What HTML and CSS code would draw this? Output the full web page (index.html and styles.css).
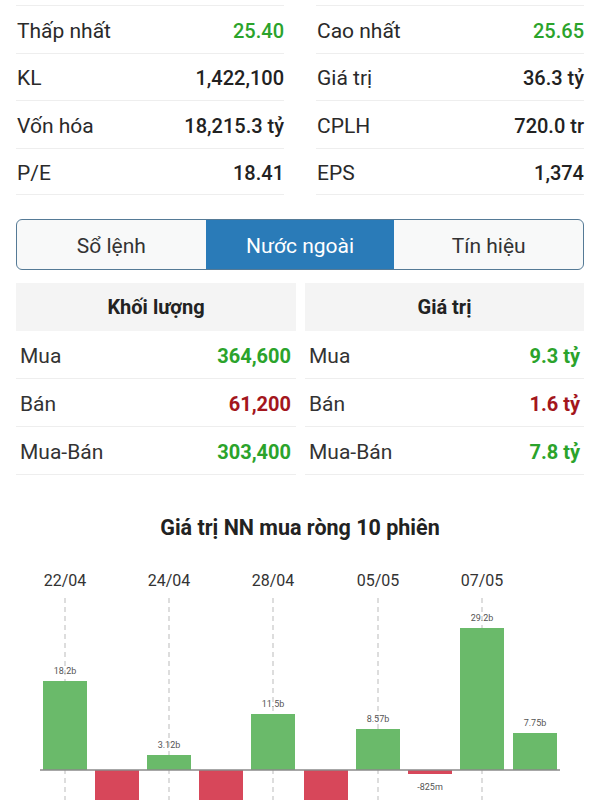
FILE: index.html
```html
<!DOCTYPE html>
<html lang="vi">
<head>
    <meta charset="UTF-8">
    <meta name="viewport" content="width=device-width, initial-scale=1.0">
    <title>Nước ngoài</title>
    <link rel="stylesheet" href="styles.css">
</head>
<body>
    <div class="page">
        <div class="stats">
            <div class="stats-col">
                <div class="stat-row"><span class="stat-label">Thấp nhất</span><span class="stat-value up">25.40</span></div>
                <div class="stat-row"><span class="stat-label">KL</span><span class="stat-value">1,422,100</span></div>
                <div class="stat-row"><span class="stat-label">Vốn hóa</span><span class="stat-value">18,215.3 tỷ</span></div>
                <div class="stat-row"><span class="stat-label">P/E</span><span class="stat-value">18.41</span></div>
            </div>
            <div class="stats-col">
                <div class="stat-row"><span class="stat-label">Cao nhất</span><span class="stat-value up">25.65</span></div>
                <div class="stat-row"><span class="stat-label">Giá trị</span><span class="stat-value">36.3 tỷ</span></div>
                <div class="stat-row"><span class="stat-label">CPLH</span><span class="stat-value">720.0 tr</span></div>
                <div class="stat-row"><span class="stat-label">EPS</span><span class="stat-value">1,374</span></div>
            </div>
        </div>

        <div class="tabs">
            <div class="tab">Sổ lệnh</div>
            <div class="tab active">Nước ngoài</div>
            <div class="tab">Tín hiệu</div>
        </div>

        <div class="foreign">
            <div class="foreign-col">
                <div class="foreign-header">Khối lượng</div>
                <div class="foreign-row"><span>Mua</span><span class="foreign-value up">364,600</span></div>
                <div class="foreign-row"><span>Bán</span><span class="foreign-value down">61,200</span></div>
                <div class="foreign-row"><span>Mua-Bán</span><span class="foreign-value up">303,400</span></div>
            </div>
            <div class="foreign-col">
                <div class="foreign-header">Giá trị</div>
                <div class="foreign-row"><span>Mua</span><span class="foreign-value up">9.3 tỷ</span></div>
                <div class="foreign-row"><span>Bán</span><span class="foreign-value down">1.6 tỷ</span></div>
                <div class="foreign-row"><span>Mua-Bán</span><span class="foreign-value up">7.8 tỷ</span></div>
            </div>
        </div>
    </div>

    <div class="chart">
        <h3 class="chart-title">Giá trị NN mua ròng 10 phiên</h3>
        <svg class="chart-svg" width="600" height="260" viewBox="0 0 600 260">
            <g class="grid">
                <line x1="65" y1="47" x2="65" y2="260"/>
                <line x1="169" y1="47" x2="169" y2="260"/>
                <line x1="273" y1="47" x2="273" y2="260"/>
                <line x1="378" y1="47" x2="378" y2="260"/>
                <line x1="482" y1="47" x2="482" y2="260"/>
            </g>
            <g class="dates">
                <text x="65" y="35">22/04</text>
                <text x="169" y="35">24/04</text>
                <text x="273" y="35">28/04</text>
                <text x="378" y="35">05/05</text>
                <text x="482" y="35">07/05</text>
            </g>
            <g class="bar-pos">
                <rect x="43" y="130" width="44" height="89"/>
                <rect x="147" y="204" width="44" height="15"/>
                <rect x="251" y="163" width="44" height="56"/>
                <rect x="356" y="178" width="44" height="41"/>
                <rect x="460" y="77" width="44" height="142"/>
                <rect x="513" y="182" width="44" height="37"/>
            </g>
            <g class="bar-neg">
                <rect x="95" y="219" width="44" height="50"/>
                <rect x="199" y="219" width="44" height="50"/>
                <rect x="304" y="219" width="44" height="50"/>
                <rect x="408" y="219" width="44" height="4"/>
            </g>
            <line class="axis" x1="40" y1="219" x2="560" y2="219"/>
            <g class="bar-labels">
                <text x="65" y="123">18.2b</text>
                <text x="169" y="197">3.12b</text>
                <text x="273" y="156">11.5b</text>
                <text x="378" y="171">8.57b</text>
                <text x="430" y="239">-825m</text>
                <text x="482" y="70">29.2b</text>
                <text x="535" y="175">7.75b</text>
            </g>
        </svg>
    </div>
</body>
</html>
```

FILE: styles.css
```css
body {
    font-family: Roboto, "Noto Sans", "Liberation Sans", sans-serif;
    color: #333;
    margin: 0;
    background-color: white;
    overflow: hidden;
}
.page {
    padding: 5px 16px 0;
}
.up { color: #2ba32b; }
.down { color: #a3161c; }

/* top stats */
.stats {
    display: grid;
    grid-template-columns: 1fr 1fr;
    gap: 32px;
}
.stat-row {
    display: flex;
    justify-content: space-between;
    align-items: center;
    box-sizing: border-box;
    height: 47.5px;
    padding-top: 3px;
    border-top: 1px solid #eeeeee;
    font-size: 21px;
}
.stat-row:last-child {
    border-bottom: 1px solid #eeeeee;
}
.stat-label {
    padding-left: 1px;
    color: #2a2a2a;
}
.stat-value {
    font-size: 20px;
    font-weight: 500;
    color: #222;
}
.stat-value.up { color: #2ba32b; }

/* tabs */
.tabs {
    display: grid;
    grid-template-columns: repeat(3, 1fr);
    margin-top: 24px;
    height: 49px;
    border: 1.5px solid #557a96;
    border-radius: 6px;
    overflow: hidden;
    background-color: #f8f9f9;
}
.tab {
    display: flex;
    align-items: center;
    justify-content: center;
    padding-top: 3px;
    font-size: 21px;
    color: #333;
}
.tab.active {
    background-color: #2a7bb8;
    color: white;
}

/* foreign trade */
.foreign {
    display: grid;
    grid-template-columns: 280px 1fr;
    gap: 9px;
    margin-top: 13px;
}
.foreign-header {
    height: 48px;
    display: flex;
    align-items: center;
    justify-content: center;
    background-color: #f4f4f4;
    font-size: 20px;
    font-weight: bold;
    color: #222;
}
.foreign-row {
    display: flex;
    justify-content: space-between;
    align-items: center;
    box-sizing: border-box;
    height: 48px;
    padding: 3px 5px 0 4px;
    border-bottom: 1px solid #eeeeee;
    font-size: 21px;
}
.foreign-col:last-child .foreign-row {
    padding-right: 4px;
}
.foreign-value {
    font-size: 20px;
    font-weight: bold;
}

/* chart */
.chart {
    margin-top: 40px;
}
.chart-title {
    margin: 0;
    text-align: center;
    font-size: 21.5px;
    line-height: 26px;
    font-weight: bold;
    color: #222;
}
.chart-svg {
    display: block;
    margin-top: 10px;
}
.grid line {
    stroke: #bbbbbb;
    stroke-width: 1;
    stroke-dasharray: 5 4;
}
.dates text {
    font-size: 16px;
    fill: #333;
    text-anchor: middle;
}
.bar-pos rect { fill: #6aba6a; }
.bar-neg rect { fill: #d7475a; }
.axis {
    stroke: #8a8a8a;
    stroke-width: 1.5;
}
.bar-labels text {
    font-size: 9px;
    fill: #555;
    text-anchor: middle;
}
```
